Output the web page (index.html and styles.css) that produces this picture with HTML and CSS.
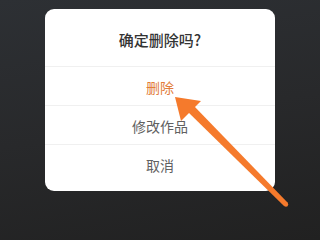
FILE: index.html
```html
<!DOCTYPE html>
<html lang="zh-CN">
<head>
    <meta charset="UTF-8">
    <title>确定删除吗?</title>
    <link rel="stylesheet" href="styles.css">
</head>
<body>
    <div class="screen">
        <div class="dialog">
            <div class="dialog-title">确定删除吗?</div>
            <div class="dialog-item danger">删除</div>
            <div class="dialog-item">修改作品</div>
            <div class="dialog-item last">取消</div>
        </div>

        <!-- hint arrow pointing at the delete option -->
        <svg class="arrow" width="320" height="240" viewBox="0 0 320 240">
            <polygon points="187,111 193,105 288,203 284,206" fill="#f57a2c"/>
            <circle cx="286" cy="204.5" r="2.2" fill="#f57a2c"/>
            <polygon points="175,97 201,101 181,121" fill="#f57a2c"/>
        </svg>
    </div>
</body>
</html>
```

FILE: styles.css
```css
body {
    margin: 0;
    font-family: "Noto Sans CJK SC", "Noto Sans", sans-serif;
}
.screen {
    position: relative;
    width: 320px;
    height: 240px;
    overflow: hidden;
    background: linear-gradient(170deg, #2d3034 0%, #28292b 50%, #212121 100%);
    display: flex;
    justify-content: center;
    align-items: flex-start;
    padding-top: 9px;
    box-sizing: border-box;
}
.dialog {
    width: 230px;
    background-color: #fff;
    border-radius: 9px;
    padding-bottom: 7px;
}
.dialog-title {
    height: 58px;
    line-height: 62px;
    text-align: center;
    font-size: 15px;
    font-weight: 500;
    color: #333;
    border-bottom: 1px solid #f0f0f0;
    box-sizing: border-box;
}
.dialog-item {
    height: 39px;
    line-height: 40px;
    text-align: center;
    font-size: 14px;
    color: #616161;
    border-bottom: 1px solid #f0f0f0;
    box-sizing: border-box;
}
.dialog-item.danger {
    color: #e27c3a;
}
.dialog-item.last {
    border-bottom: none;
}
.arrow {
    position: absolute;
    left: 0;
    top: 0;
}
```
